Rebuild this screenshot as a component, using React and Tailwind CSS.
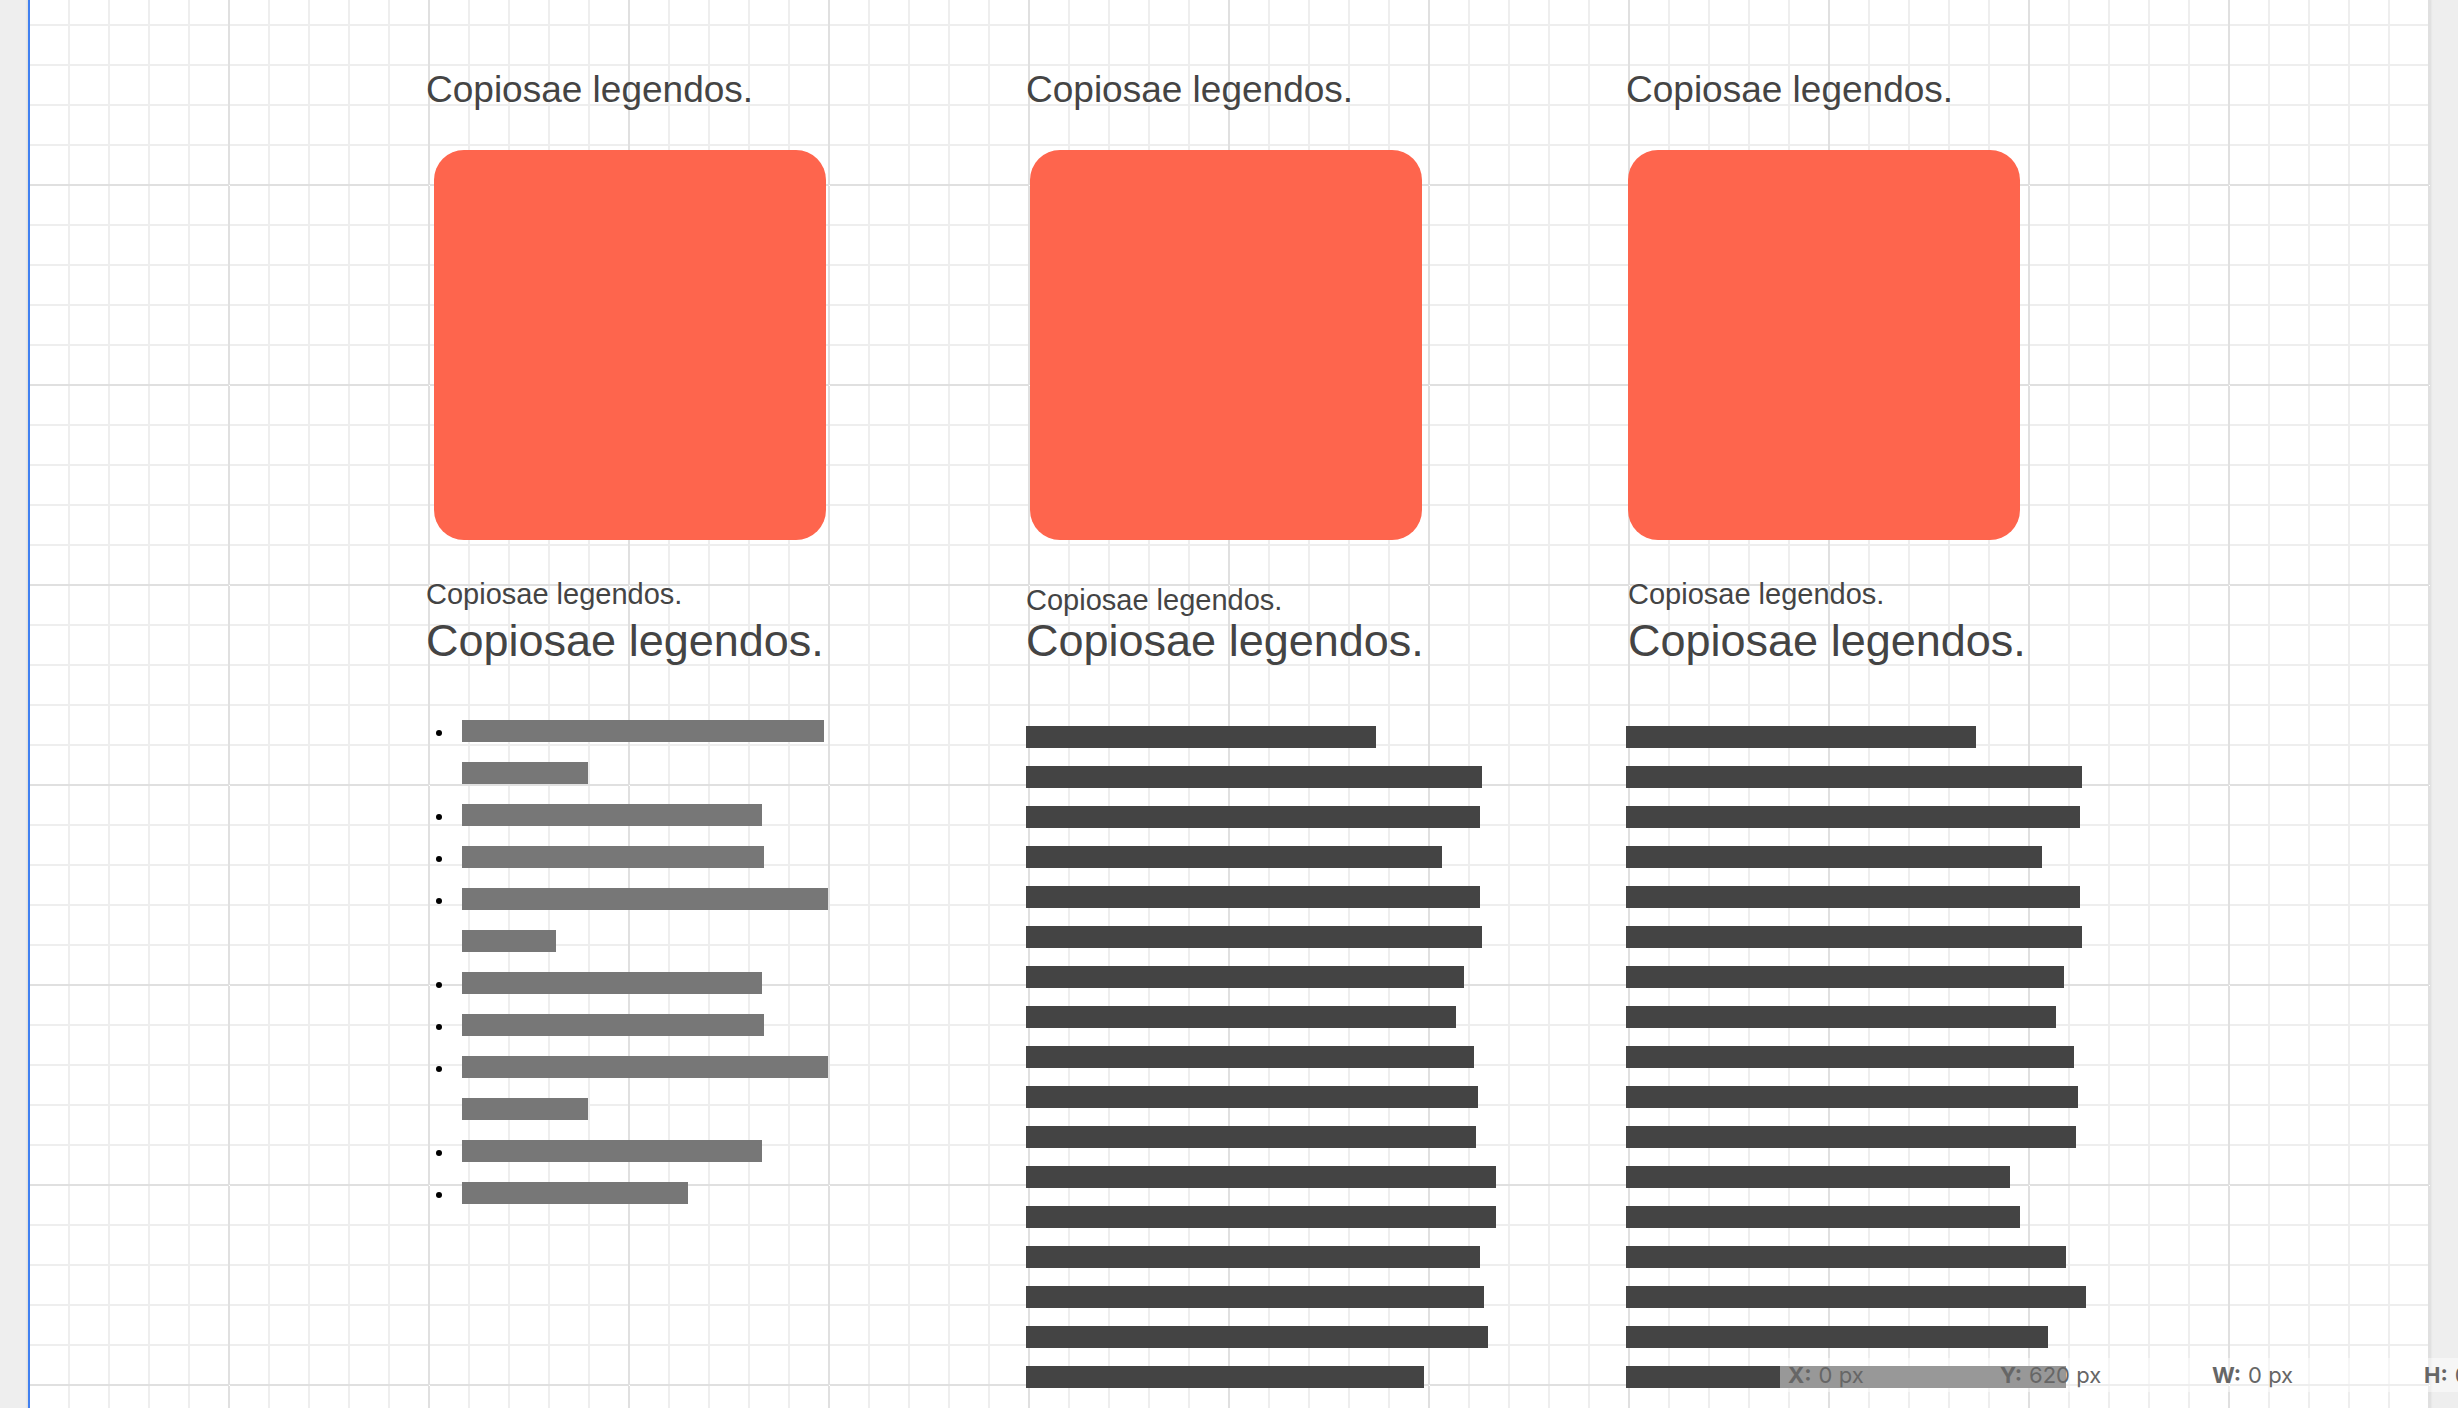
const TITLE = "Copiosae legendos.";

const BULLETS = [
  [362, 126],
  [300],
  [302],
  [366, 94],
  [300],
  [302],
  [366, 126],
  [300],
  [226],
];

const MIDDLE = [350, 456, 454, 416, 454, 456, 438, 430, 448, 452, 450, 470, 470, 454, 458, 462, 398];
const RIGHT = [350, 456, 454, 416, 454, 456, 438, 430, 448, 452, 450, 384, 394, 440, 460, 422, 440];

const READOUT = [
  ["X:", "0 px"],
  ["Y:", "620 px"],
  ["W:", "0 px"],
  ["H:", "0 px"],
];

function Column({ card, label, heading = "", children }) {
  return (
    <section className="min-w-0">
      <h2 className="whitespace-nowrap text-[37px] leading-10">{TITLE}</h2>
      <div className={`mt-10 h-[390px] w-[392px] rounded-[30px] bg-[#fe654d] ${card}`} />
      <p className={`h-[77px] whitespace-nowrap text-[29px] leading-[34px] ${label}`}>{TITLE}</p>
      <h3 className={`whitespace-nowrap text-[45px] leading-[48px] ${heading}`}>{TITLE}</h3>
      {children}
    </section>
  );
}

function Paragraph({ lines }) {
  return (
    <div className="mt-[61px] flex flex-col gap-[18px]">
      {lines.map((width, i) => (
        <div key={i} className="h-[22px] bg-[#444]" style={{ width }} />
      ))}
    </div>
  );
}

function BulletList() {
  return (
    <ul className="mt-[55px] flex flex-col gap-5 pl-[10px]">
      {BULLETS.map((lines, i) => (
        <li key={i} className="flex gap-5">
          <span className="mt-[10px] size-[6px] shrink-0 rounded-full bg-black" />
          <div className="flex flex-col gap-5">
            {lines.map((width, j) => (
              <div key={j} className="h-[22px] bg-[#777]" style={{ width }} />
            ))}
          </div>
        </li>
      ))}
    </ul>
  );
}

export default function App() {
  return (
    <div className="relative min-h-screen overflow-hidden bg-[#eee] px-7 font-['Liberation_Sans',Arial,sans-serif] text-[#444]">
      <main className="min-h-screen border-l-2 border-[#4080f0] bg-white bg-[image:conic-gradient(from_270deg_at_1px_1px,#fff_25%,transparent_0),linear-gradient(to_right,#e0e0e0_2px,transparent_2px),linear-gradient(to_bottom,#e0e0e0_2px,transparent_2px),linear-gradient(to_right,#eee_2px,transparent_2px),linear-gradient(to_bottom,#eee_2px,transparent_2px)] bg-[position:199px_185px,198px_184px,198px_184px,38px_24px,38px_24px] bg-[size:200px_200px,200px_200px,200px_200px,40px_40px,40px_40px] pb-5 pt-[70px] shadow-[0_0_2px_1px_rgba(0,0,0,0.08)]">
        <div className="-ml-1 mr-1 grid grid-cols-[2fr_3fr_3fr_3fr_1fr]">
          <div />
          <Column card="ml-2" label="pt-[37px]">
            <BulletList />
          </Column>
          <Column card="ml-1" label="pt-[43px]">
            <Paragraph lines={MIDDLE} />
          </Column>
          <Column card="ml-0.5" label="pl-0.5 pt-[37px]" heading="pl-0.5">
            <Paragraph lines={RIGHT} />
          </Column>
        </div>
      </main>
      <dl className="absolute bottom-4 right-0 flex h-[34px] w-[678px] items-center overflow-hidden bg-white/45 font-[Inter,sans-serif] text-[22px] leading-[34px] text-[#666]">
        {READOUT.map(([name, value]) => (
          <div key={name} className="flex w-[212px] shrink-0 gap-[7px] whitespace-nowrap pl-2">
            <dt className="font-bold">{name}</dt>
            <dd>{value}</dd>
          </div>
        ))}
      </dl>
    </div>
  );
}
